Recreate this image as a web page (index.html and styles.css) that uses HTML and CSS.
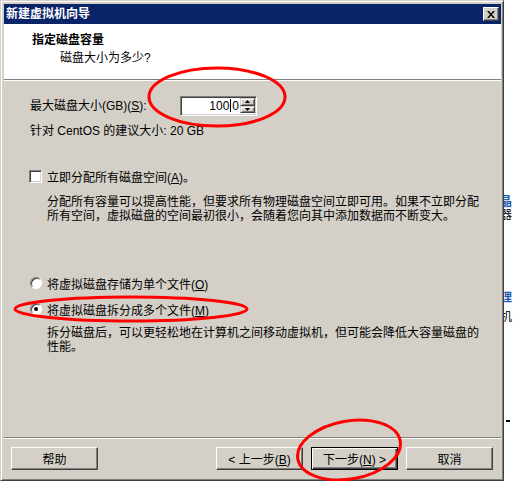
FILE: index.html
```html
<!DOCTYPE html>
<html lang="zh-CN">
<head>
<meta charset="UTF-8" />
<title>新建虚拟机向导</title>
<link rel="stylesheet" href="styles.css">
</head>
<body>

<!-- ventana de fondo, casi toda tapada por el diálogo -->
<div class="backdrop">
  <span class="frag blue" style="top:196px">晶</span>
  <span class="frag" style="top:209px">器</span>
  <span class="frag blue" style="top:292px">理</span>
  <span class="frag" style="top:311px">机</span>
  <span class="frag tick" style="top:420px"></span>
</div>

<div class="dialog">
  <div class="titlebar">
    <span class="title">新建虚拟机向导</span>
    <span class="close">
      <svg width="8" height="7" viewBox="0 0 8 7"><path d="M0 0h2l2 2.5L6 0h2L5 3.5 8 7H6L4 4.5 2 7H0l3-3.5z" fill="#000"/></svg>
    </span>
  </div>

  <div class="header">
    <div class="head-title">指定磁盘容量</div>
    <div class="head-sub">磁盘大小为多少?</div>
  </div>
  <div class="rule"></div>

  <div class="content">
    <div class="size-row">
      <label class="size-label">最大磁盘大小(GB)(<u>S</u>):</label>
      <div class="spin">
        <div class="spin-value">100<span class="caret"></span>0</div>
        <div class="spin-btns">
          <span class="spin-btn"><svg width="5" height="3" viewBox="0 0 5 3"><path d="M2.5 0L5 3H0z" fill="#000"/></svg></span>
          <span class="spin-btn"><svg width="5" height="3" viewBox="0 0 5 3"><path d="M0 0h5L2.5 3z" fill="#000"/></svg></span>
        </div>
      </div>
    </div>
    <div class="hint">针对 CentOS 的建议大小: 20 GB</div>

    <div class="option check-row">
      <span class="checkbox"></span>
      <span>立即分配所有磁盘空间(<u>A</u>)。</span>
    </div>
    <div class="desc first">分配所有容量可以提高性能，但要求所有物理磁盘空间立即可用。如果不立即分配<br>所有空间，虚拟磁盘的空间最初很小，会随着您向其中添加数据而不断变大。</div>

    <div class="option radio-row one">
      <span class="radio"></span>
      <span>将虚拟磁盘存储为单个文件(<u>O</u>)</span>
    </div>
    <div class="option radio-row two">
      <span class="radio on"></span>
      <span>将虚拟磁盘拆分成多个文件(<u>M</u>)</span>
    </div>
    <div class="desc second">拆分磁盘后，可以更轻松地在计算机之间移动虚拟机，但可能会降低大容量磁盘的<br>性能。</div>
  </div>

  <div class="rule"></div>
  <div class="footer">
    <button class="btn">帮助</button>
    <button class="btn push">&lt; 上一步(<u>B</u>)</button>
    <button class="btn default">下一步(<u>N</u>) &gt;</button>
    <button class="btn">取消</button>
  </div>
</div>

<!-- marcas rojas dibujadas encima de la captura -->
<svg class="marks" width="513" height="481" viewBox="0 0 513 481">
  <ellipse cx="217" cy="97" rx="68" ry="29" />
  <ellipse cx="131" cy="309" rx="116" ry="12" />
  <ellipse cx="349" cy="450" rx="52" ry="29" transform="rotate(-10 349 450)" />
</svg>

</body>
</html>
```

FILE: styles.css
```css
* { box-sizing: border-box; }
body {
  margin: 0;
  width: 513px;
  height: 481px;
  overflow: hidden;
  position: relative;
  background: #fff;
  font-family: "Liberation Sans", "Noto Sans CJK SC", sans-serif;
  font-size: 12px;
  color: #000;
}
u { text-decoration: underline; text-underline-offset: 1px; }

/* fondo */
.backdrop { position: absolute; top: 0; left: 0; width: 513px; height: 481px; }
.frag { position: absolute; left: 500px; font-size: 12px; line-height: 13px; }
.frag.blue { color: #1f5cae; font-weight: bold; }
.frag.tick { left: 506px; width: 4px; height: 2px; background: #000; }

/* ventana */
.dialog {
  position: relative;
  z-index: 1;
  width: 504px;
  height: 481px;
  background: #d4d0c8;
  border: 1px solid;
  border-color: #d4d0c8 #404040 #404040 #d4d0c8;
  box-shadow: inset 1px 1px #fff, inset -1px -1px #808080;
  padding: 3px 2px 2px 3px;
  display: flex;
  flex-direction: column;
}
.titlebar {
  height: 20px;
  background: #0a246a;
  display: flex;
  align-items: center;
  justify-content: space-between;
  padding: 0 2px 0 2px;
}
.title { color: #fff; font-weight: bold; font-size: 12px; line-height: 14px; }
.close {
  width: 16px;
  height: 14px;
  background: #d4d0c8;
  border: 1px solid;
  border-color: #fff #404040 #404040 #fff;
  box-shadow: inset -1px -1px #808080;
  display: flex;
  align-items: center;
  justify-content: center;
  padding-right: 1px;
}

.header { height: 55px; background: #fff; padding: 9px 0 0 28px; }
.head-title { font-weight: bold; line-height: 14px; }
.head-sub { margin: 4px 0 0 28px; line-height: 14px; }
.rule { height: 2px; border-top: 1px solid #808080; border-bottom: 1px solid #fff; }

/* cuerpo */
.content { height: 356px; padding-left: 26px; display: flex; flex-direction: column; }
.size-row { margin-top: 15px; display: flex; align-items: center; height: 20px; }
.size-label { width: 150px; line-height: 14px; }
.spin {
  width: 77px;
  height: 20px;
  background: #fff;
  border: 1px solid;
  border-color: #808080 #fff #fff #808080;
  box-shadow: inset 1px 1px #404040, inset -1px -1px #d4d0c8;
  display: flex;
  padding: 1px;
}
.spin-value {
  flex: 1;
  text-align: right;
  line-height: 16px;
  padding-right: 1px;
}
.caret { display: inline-block; width: 1px; height: 13px; background: #000; vertical-align: -2px; margin: 0 1px; }
.spin-btns { width: 15px; display: flex; flex-direction: column; padding-bottom: 1px; }
.spin-btn {
  flex: 1;
  background: #d4d0c8;
  border: 1px solid;
  border-color: #d4d0c8 #404040 #404040 #d4d0c8;
  box-shadow: inset 1px 1px #fff, inset -1px -1px #808080;
  display: flex;
  align-items: center;
  justify-content: center;
}
.hint { margin-top: 8px; line-height: 14px; }

.option { display: flex; align-items: center; height: 14px; }
.check-row { margin-top: 31px; margin-left: -1px; gap: 5px; }
.radio-row { gap: 5px; }
.radio-row.one { margin-top: 53px; }
.radio-row.two { margin-top: 12px; }
.checkbox {
  width: 13px;
  height: 13px;
  background: #fff;
  border: 1px solid;
  border-color: #808080 #fff #fff #808080;
  box-shadow: inset 1px 1px #404040, inset -1px -1px #d4d0c8;
}
.radio {
  width: 12px;
  height: 12px;
  border-radius: 50%;
  background: #fff;
  border: 1px solid;
  border-color: #808080 #fff #fff #808080;
  box-shadow: inset 1px 1px #404040;
  display: flex;
  align-items: center;
  justify-content: center;
}
.radio.on::after { content: ""; width: 4px; height: 4px; border-radius: 50%; background: #000; }
.desc { padding-left: 17px; line-height: 14px; white-space: nowrap; }
.desc.first { margin-top: 12px; }
.desc.second { margin-top: 10px; }

/* botones */
.footer { height: 39px; display: flex; padding: 8px 8px 0 7px; }
.btn {
  width: 87px;
  height: 23px;
  margin-left: 8px;
  background: #d4d0c8;
  border: 1px solid;
  border-color: #fff #404040 #404040 #fff;
  box-shadow: inset -1px -1px #808080;
  font: inherit;
  color: #000;
  padding: 0;
}
.btn:first-child { margin-left: 0; }
.btn.push { margin-left: auto; }
.btn.default {
  border-color: #000;
  box-shadow: inset 1px 1px #fff, inset -1px -1px #404040, inset -2px -2px #808080;
}

.marks { position: absolute; top: 0; left: 0; z-index: 2; pointer-events: none; }
.marks ellipse { fill: none; stroke: #f00; stroke-width: 3; }
```
